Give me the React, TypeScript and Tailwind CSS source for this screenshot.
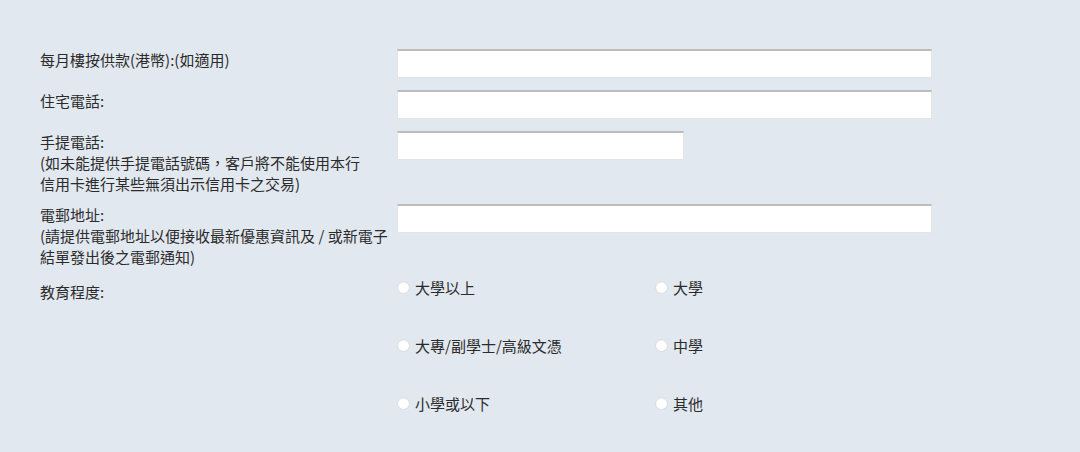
const FONT = "font-['Noto_Sans_CJK_TC','Noto_Sans_CJK_SC',sans-serif]";

function TextInput({ width }: { width: string }) {
  return (
    <input
      type="text"
      className={`h-[29px] ${width} border border-[#e4e4e4] border-t-2 border-t-[#bcbcbc] bg-white outline-none`}
    />
  );
}

function Radio({ label }: { label: string }) {
  return (
    <label className="flex h-[21px] items-center gap-[5px]">
      <span className="h-[13px] w-[13px] rounded-full border border-[#dcdcdc] bg-white shadow-[inset_0_1px_1px_rgba(0,0,0,0.06)]" />
      <span>{label}</span>
    </label>
  );
}

export default function App() {
  const levels = ['大學以上', '大學', '大專/副學士/高級文憑', '中學', '小學或以下', '其他'];

  return (
    <div className={`h-[452px] w-[1080px] bg-[#e2e8f0] pl-[40px] pt-[49px] text-[15px] leading-[21px] text-[#2b2b2b] ${FONT}`}>
      <div className="flex">
        <div className="w-[357px]">每月樓按供款(港幣):(如適用)</div>
        <TextInput width="w-[535px]" />
      </div>

      <div className="mt-[12px] flex">
        <div className="w-[357px]">住宅電話:</div>
        <TextInput width="w-[535px]" />
      </div>

      <div className="mt-[12px] flex">
        <div className="w-[357px]">
          <div className="whitespace-nowrap">手提電話:</div>
          <div className="whitespace-nowrap">(如未能提供手提電話號碼，客戶將不能使用本行</div>
          <div className="whitespace-nowrap">信用卡進行某些無須出示信用卡之交易)</div>
        </div>
        <TextInput width="w-[287px]" />
      </div>

      <div className="mt-[10px] flex">
        <div className="w-[357px]">
          <div className="whitespace-nowrap">電郵地址:</div>
          <div className="whitespace-nowrap">(請提供電郵地址以便接收最新優惠資訊及 / 或新電子</div>
          <div className="whitespace-nowrap">結單發出後之電郵通知)</div>
        </div>
        <TextInput width="w-[535px]" />
      </div>

      <div className="mt-[14px] flex">
        <div className="w-[357px]">教育程度:</div>
        <div className="-mt-[4px] grid grid-cols-[258px_258px] gap-y-[37px]">
          {levels.map((l) => (
            <Radio key={l} label={l} />
          ))}
        </div>
      </div>
    </div>
  );
}
